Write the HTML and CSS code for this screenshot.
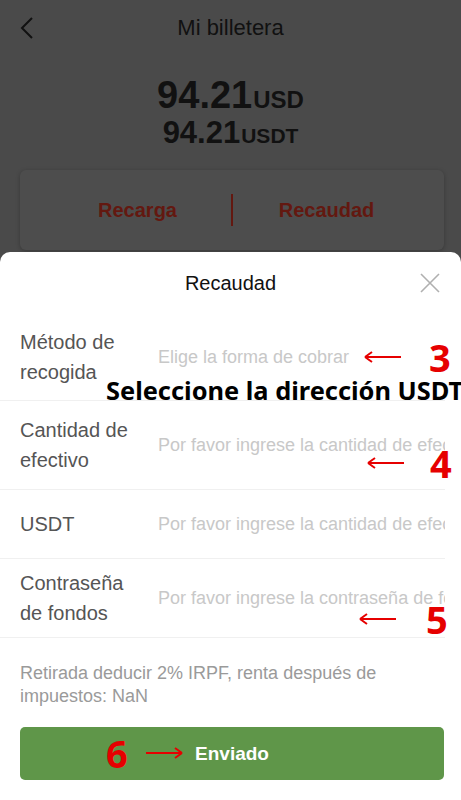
FILE: index.html
```html
<!DOCTYPE html>
<html lang="es">
<head>
<meta charset="utf-8">
<title>Mi billetera</title>
<link rel="stylesheet" href="styles.css">
</head>
<body>
<div class="app">
  <header class="topbar">
    <svg class="back" width="16" height="22" viewBox="0 0 16 22"><path d="M13 1 L3 11 L13 21" fill="none" stroke="#111" stroke-width="2"/></svg>
    <h1 class="title">Mi billetera</h1>
  </header>

  <section class="balance">
    <div class="bal-main"><span class="num">94.21</span><span class="unit">USD</span></div>
    <div class="bal-sub"><span class="num">94.21</span><span class="unit">USDT</span></div>
  </section>

  <section class="actions">
    <div class="action">Recarga</div>
    <div class="divider"></div>
    <div class="action">Recaudad</div>
  </section>

  <section class="sheet">
    <div class="sheet-head">
      <h2 class="sheet-title">Recaudad</h2>
      <svg class="close" width="20" height="20" viewBox="0 0 20 20"><path d="M1 1 L19 19 M19 1 L1 19" stroke="#b0b0b0" stroke-width="1.6"/></svg>
    </div>
    <div class="form">
      <div class="row row-1">
        <div class="label">Método de<br>recogida</div>
        <div class="field">Elige la forma de cobrar</div>
      </div>
      <div class="row row-2">
        <div class="label">Cantidad de<br>efectivo</div>
        <div class="field">Por favor ingrese la cantidad de efectivo</div>
      </div>
      <div class="row row-3">
        <div class="label">USDT</div>
        <div class="field">Por favor ingrese la cantidad de efectivo</div>
      </div>
      <div class="row row-4">
        <div class="label">Contraseña<br>de fondos</div>
        <div class="field">Por favor ingrese la contraseña de fondos</div>
      </div>
    </div>
    <p class="note">Retirada deducir 2% IRPF, renta después de<br>impuestos: NaN</p>
    <button class="submit">Enviado</button>
  </section>

  <div class="anno anno-3">
    <svg class="arrow" width="38" height="12" viewBox="0 0 38 12"><path d="M1 6 H37 M1 6 L8 1 M1 6 L8 11" fill="none" stroke="#e60000" stroke-width="2"/></svg>
    <span class="anno-num">3</span>
  </div>
  <div class="anno-text">Seleccione la dirección USDT</div>
  <div class="anno anno-4">
    <svg class="arrow" width="38" height="12" viewBox="0 0 38 12"><path d="M1 6 H37 M1 6 L8 1 M1 6 L8 11" fill="none" stroke="#e60000" stroke-width="2"/></svg>
    <span class="anno-num">4</span>
  </div>
  <div class="anno anno-5">
    <svg class="arrow" width="38" height="12" viewBox="0 0 38 12"><path d="M1 6 H37 M1 6 L8 1 M1 6 L8 11" fill="none" stroke="#e60000" stroke-width="2"/></svg>
    <span class="anno-num">5</span>
  </div>
  <div class="anno anno-6">
    <span class="anno-num">6</span>
    <svg class="arrow" width="38" height="12" viewBox="0 0 38 12"><path d="M1 6 H37 M37 6 L30 1 M37 6 L30 11" fill="none" stroke="#e60000" stroke-width="2"/></svg>
  </div>
</div>
</body>
</html>
```

FILE: styles.css
```css
* { box-sizing: border-box; margin: 0; padding: 0; }
html, body { width: 461px; height: 800px; overflow: hidden; }
body { font-family: "Liberation Sans", Arial, sans-serif; background: #4a4a4a; }

.app { position: relative; width: 461px; height: 800px; background: #4a4a4a; display: flex; flex-direction: column; }

.topbar { height: 56px; display: flex; align-items: center; justify-content: center; position: relative; }
.back { position: absolute; left: 19px; top: 17px; }
.title { font-size: 22px; font-weight: normal; color: #111; margin-top: -1px; }

.balance { display: flex; flex-direction: column; align-items: center; padding-top: 18px; color: #111; font-weight: bold; }
.bal-main { display: flex; align-items: baseline; height: 42px; }
.bal-main .num { font-size: 38px; line-height: 42px; }
.bal-main .unit { font-size: 24px; margin-left: 1px; }
.bal-sub { display: flex; align-items: baseline; height: 34px; }
.bal-sub .num { font-size: 31px; line-height: 34px; }
.bal-sub .unit { font-size: 21px; margin-left: 1px; }

.actions { margin: 20px 17px 0 20px; height: 80px; background: #4d4d4d; border-radius: 6px; box-shadow: 0 1px 4px rgba(0,0,0,0.25); display: flex; align-items: center; }
.action { flex: 1; text-align: center; font-size: 20px; font-weight: bold; color: #631810; }
.action:first-child { padding-left: 24px; }
.action:last-child { padding-right: 24px; }
.divider { width: 2px; height: 32px; background: #631810; }

.sheet { margin-top: 2px; flex: 1; background: #fff; border-radius: 10px 10px 0 0; display: flex; flex-direction: column; }
.sheet-head { height: 62px; display: flex; align-items: center; justify-content: center; position: relative; }
.sheet-title { font-size: 20px; font-weight: normal; color: #111; }
.close { position: absolute; right: 21px; top: 21px; }

.form { margin-right: 16px; }
.row { display: flex; align-items: center; border-bottom: 1px solid #f0f0f0; overflow: hidden; }
.row-1 { height: 87px; }
.row-2 { height: 89px; }
.row-3 { height: 69px; }
.row-4 { height: 79px; }
.label { width: 158px; flex: none; padding-left: 20px; font-size: 20px; line-height: 30px; color: #555; }
.field { flex: 1; white-space: nowrap; overflow: hidden; font-size: 18px; color: #c8c8c8; }
.row-1 .field { margin-top: 1px; }

.note { padding: 24px 20px 0 20px; font-size: 18px; line-height: 23px; color: #9a9a9a; }
.submit { margin: 19px 17px 0 20px; height: 53px; border: none; border-radius: 5px; background: #5f9649; color: #fff; font-family: "Liberation Sans", Arial, sans-serif; font-size: 19px; font-weight: bold; }

.anno { position: absolute; display: flex; align-items: center; }
.anno-num { font-family: "Noto Sans", "DejaVu Sans", sans-serif; font-weight: bold; font-size: 38px; line-height: 38px; color: #e60000; }
.anno-3 { left: 364px; top: 338px; gap: 27px; }
.anno-4 { left: 367px; top: 444px; gap: 25px; }
.anno-5 { left: 359px; top: 600px; gap: 29px; }
.anno-6 { left: 106px; top: 734px; gap: 17px; }
.anno-text { position: absolute; left: 106px; top: 374px; font-family: "Noto Sans", "DejaVu Sans", sans-serif; font-weight: bold; font-size: 25.4px; line-height: 32px; color: #000; white-space: nowrap; }
```
